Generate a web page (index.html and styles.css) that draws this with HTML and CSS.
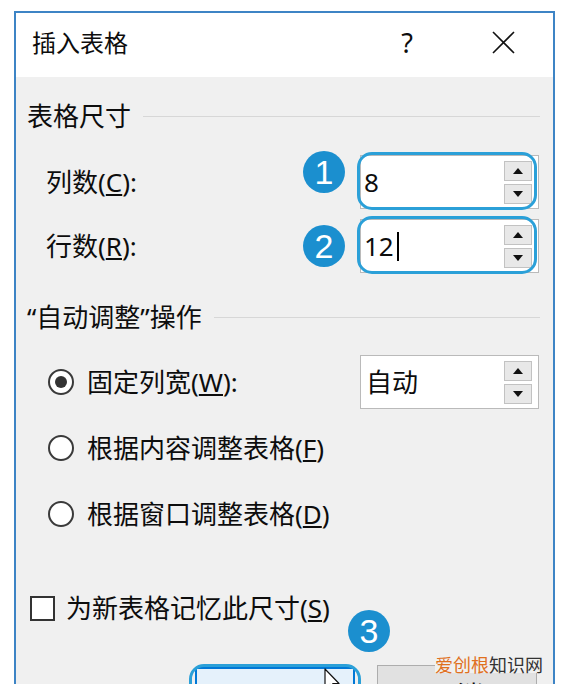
FILE: index.html
```html
<!DOCTYPE html>
<html lang="zh-CN">
<head>
<meta charset="utf-8">
<title>插入表格</title>
<link rel="stylesheet" href="styles.css">
</head>
<body>
<div class="dialog">
  <div class="titlebar">
    <span class="title">插入表格</span>
    <span class="help">?</span>
    <svg class="close" viewBox="0 0 23 23" width="23" height="23"><path d="M1 1L22 22M22 1L1 22" stroke="#111" stroke-width="1.6" fill="none"/></svg>
  </div>
  <div class="body">
    <div class="group-head h1"><span>表格尺寸</span><i class="rule"></i></div>
    <div class="field-row r1">
      <span class="label">列数(<u>C</u>):</span>
      <div class="spin hl">
        <span class="val">8</span>
        <div class="spin-btns"><b class="up"></b><b class="down"></b></div>
      </div>
    </div>
    <div class="field-row r2">
      <span class="label">行数(<u>R</u>):</span>
      <div class="spin hl">
        <span class="val">12<i class="caret"></i></span>
        <div class="spin-btns"><b class="up"></b><b class="down"></b></div>
      </div>
    </div>
    <div class="group-head h2"><span>“自动调整”操作</span><i class="rule"></i></div>
    <div class="radio-row rr1">
      <span class="radio on"></span>
      <span class="rlabel">固定列宽(<u>W</u>):</span>
      <div class="spin auto">
        <span class="val">自动</span>
        <div class="spin-btns"><b class="up"></b><b class="down"></b></div>
      </div>
    </div>
    <div class="radio-row">
      <span class="radio"></span>
      <span class="rlabel">根据内容调整表格(<u>F</u>)</span>
    </div>
    <div class="radio-row">
      <span class="radio"></span>
      <span class="rlabel">根据窗口调整表格(<u>D</u>)</span>
    </div>
    <div class="check-row">
      <span class="checkbox"></span>
      <span class="clabel">为新表格记忆此尺寸(<u>S</u>)</span>
    </div>
    <div class="btn-row">
      <div class="btn ok">确定
        <svg class="pointer" viewBox="0 0 16 24" width="16" height="24"><path d="M1 1L1 21L6 16.5L9.5 23L12 22L8.8 15.5L15 15.5Z" fill="#fff" stroke="#111" stroke-width="1.2" stroke-linejoin="round"/></svg>
      </div>
      <div class="btn cancel">取消</div>
    </div>
    <span class="badge b1">1</span>
    <span class="badge b2">2</span>
    <span class="badge b3">3</span>
    <div class="watermark"><span class="wm-o">爱创根</span>知识网</div>
  </div>
</div>
</body>
</html>
```
FILE: styles.css
```css
html, body {
  margin: 0;
  padding: 0;
}
body {
  width: 568px;
  height: 684px;
  overflow: hidden;
  background: #ffffff;
  font-family: "Noto Sans", "Noto Sans CJK SC", sans-serif;
  color: #0d0d0d;
}
.dialog {
  margin: 11px 0 0 14px;
  width: 537px;
  height: 700px;
  border: 2px solid #3d84c5;
  border-bottom: none;
  background: #f0f0f0;
}
.titlebar {
  height: 64px;
  box-sizing: border-box;
  background: #ffffff;
  display: flex;
  align-items: center;
  padding: 0 38px 5px 16px;
}
.title {
  flex: 1;
  font-size: 24px;
  line-height: 30px;
}
.help {
  font-size: 27px;
  line-height: 30px;
  margin-right: 79px;
}
.close {
  display: block;
}
.body {
  position: relative;
  padding: 0 13px 0 11px;
}
.group-head {
  display: flex;
  align-items: center;
  height: 30px;
  font-size: 26px;
  line-height: 30px;
}
.group-head .rule {
  flex: 1;
  height: 1px;
  background: #d7d7d7;
  margin-left: 12px;
}
.h1 { padding-top: 24px; }
.h2 { margin-top: 29px; }
.field-row {
  display: flex;
  align-items: center;
  justify-content: space-between;
  height: 54px;
}
.r1 { margin-top: 24px; }
.r2 { margin-top: 10px; }
.label {
  font-size: 26px;
  line-height: 30px;
  padding-left: 19px;
}
.spin {
  position: relative;
  width: 179px;
  height: 54px;
  box-sizing: border-box;
  border: 1px solid #bababa;
  background: #ffffff;
  display: flex;
  align-items: center;
  margin-right: 1px;
}
.val {
  flex: 1;
  font-size: 26px;
  line-height: 30px;
  padding-left: 3px;
  display: flex;
  align-items: center;
}
.auto .val { padding-left: 5px; }
.caret {
  display: inline-block;
  width: 2px;
  height: 29px;
  background: #000;
  margin-left: 3px;
}
.spin-btns {
  display: flex;
  flex-direction: column;
  gap: 3px;
  margin-right: 6px;
}
.spin-btns b {
  width: 28px;
  height: 20px;
  box-sizing: border-box;
  border: 1px solid #c2c2c2;
  background: #e8e8e8;
  display: flex;
  align-items: center;
  justify-content: center;
}
.spin-btns b::before {
  content: "";
  border-left: 5px solid transparent;
  border-right: 5px solid transparent;
}
.spin-btns .up::before { border-bottom: 6px solid #111; }
.spin-btns .down::before { border-top: 6px solid #111; }
.hl::after {
  content: "";
  position: absolute;
  top: -4px;
  left: -4px;
  right: 1px;
  bottom: -2px;
  border: 3.5px solid #2ba0d8;
  border-radius: 15px;
}
.radio-row {
  display: flex;
  align-items: center;
  height: 66px;
  font-size: 26px;
  line-height: 30px;
}
.rr1 { margin-top: 17px; }
.radio {
  width: 26px;
  height: 26px;
  box-sizing: border-box;
  border: 2px solid #3a3a3a;
  border-radius: 50%;
  background: #ffffff;
  margin: 0 13px 0 21px;
  display: flex;
  align-items: center;
  justify-content: center;
}
.radio.on::before {
  content: "";
  width: 12px;
  height: 12px;
  border-radius: 50%;
  background: #333;
}
.rr1 .spin { margin-left: auto; }
.check-row {
  display: flex;
  align-items: center;
  height: 30px;
  margin-top: 46px;
  font-size: 26px;
  line-height: 30px;
}
.checkbox {
  width: 25px;
  height: 25px;
  box-sizing: border-box;
  border: 2px solid #333;
  background: #ffffff;
  margin: 0 11px 0 3px;
}
.btn-row {
  display: flex;
  justify-content: flex-end;
  align-items: flex-start;
  gap: 22px;
  margin-top: 42px;
  padding-right: 3px;
}
.btn {
  width: 160px;
  height: 52px;
  box-sizing: border-box;
  padding-top: 5px;
  font-size: 26px;
  display: flex;
  align-items: center;
  justify-content: center;
}
.ok {
  position: relative;
  margin-top: 2px;
  border: 2px solid #0078d7;
  background: #e5f1fb;
}
.ok::after {
  content: "";
  position: absolute;
  top: -5px;
  left: -8px;
  right: -8px;
  bottom: -8px;
  border: 3.5px solid #2ba0d8;
  border-radius: 15px;
}
.pointer {
  position: absolute;
  left: 127px;
  top: -1px;
}
.cancel {
  border: 1px solid #adadad;
  background: #e1e1e1;
}
.badge {
  position: absolute;
  width: 42px;
  height: 42px;
  border-radius: 50%;
  background: #1b8fcf;
  color: #ffffff;
  font-family: "Liberation Sans", sans-serif;
  font-size: 34px;
  line-height: 42px;
  text-align: center;
}
.b1 { left: 287px; top: 74px; }
.b2 { left: 287px; top: 148px; }
.b3 { left: 332px; top: 533px; }
.watermark {
  position: absolute;
  left: 419px;
  top: 578px;
  font-family: "Noto Sans CJK SC", sans-serif;
  font-size: 18px;
  line-height: 18px;
  color: #333;
  background: #f0f0f0;
}
.wm-o { color: #e0701e; }
```
